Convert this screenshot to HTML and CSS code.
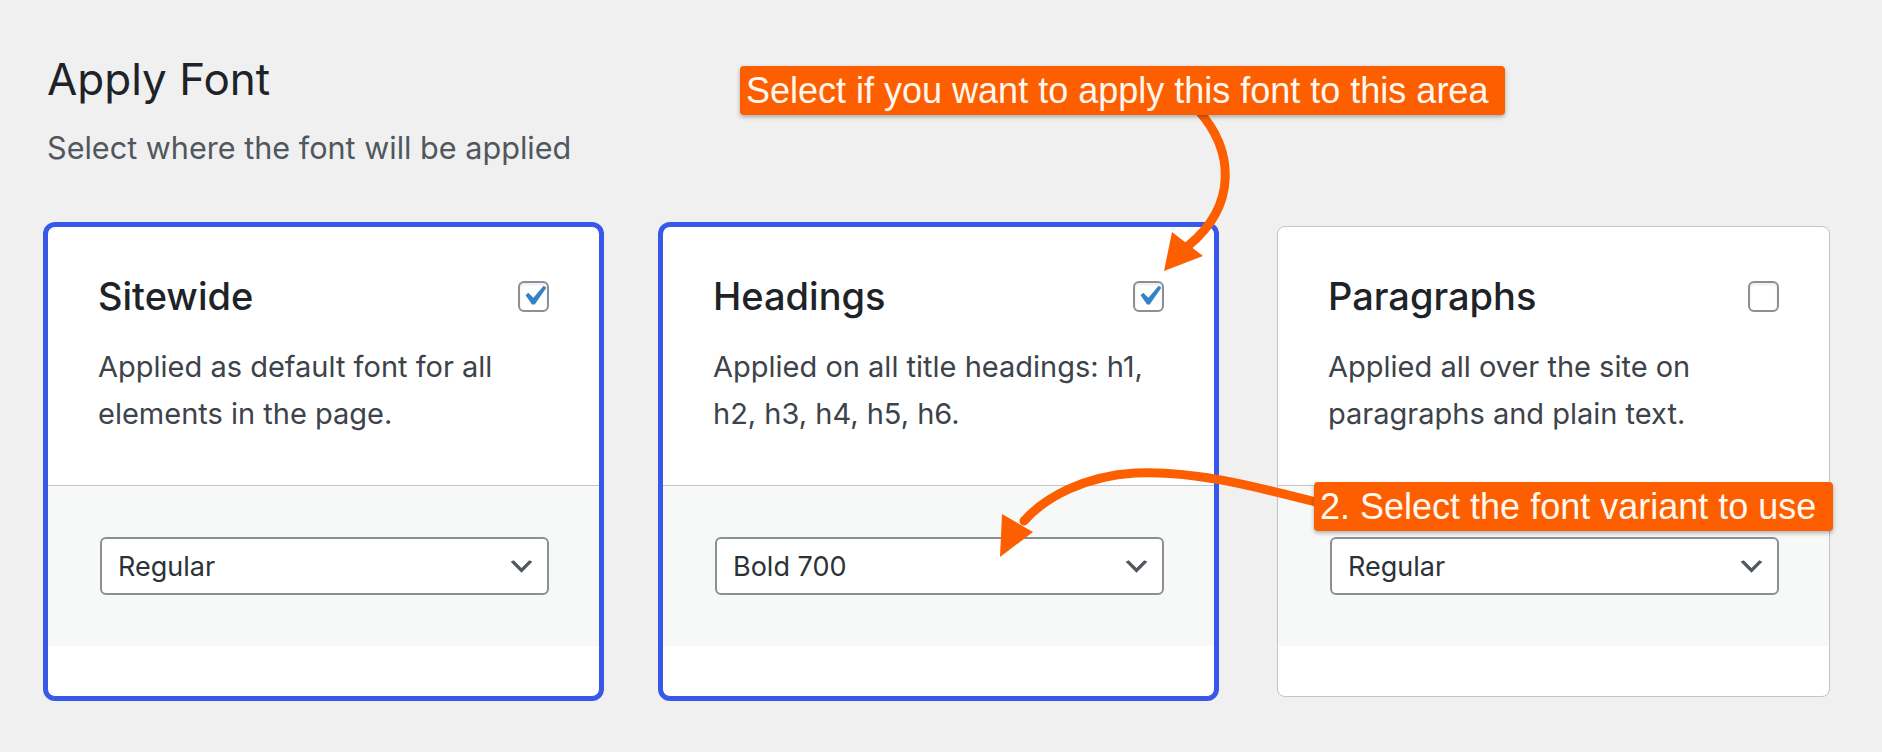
FILE: index.html
```html
<!DOCTYPE html>
<html lang="en">
<head>
<meta charset="utf-8">
<title>Apply Font</title>
<link rel="stylesheet" href="styles.css">
</head>
<body>
<div class="page">
  <h1 class="title">Apply Font</h1>
  <p class="subtitle">Select where the font will be applied</p>

  <div class="cards">
    <div class="card is-selected">
      <div class="card-body">
        <div class="card-head">
          <h2 class="card-title">Sitewide</h2>
          <span class="checkbox is-checked">
            <svg viewBox="0 0 20 20" width="40" height="40"><path d="M14.83 4.89l1.34.94-5.81 8.38H9.02L5.78 9.67l1.34-1.25 2.57 2.4z" fill="#3582c4"/></svg>
          </span>
        </div>
        <p class="card-desc">Applied as default font for all elements in the page.</p>
      </div>
      <div class="card-footer">
        <div class="select">
          <span>Regular</span>
          <svg viewBox="0 0 20 20" width="31" height="31"><path d="M5 6l5 5 5-5 2 1-7 7-7-7 2-1z" fill="#50575e"/></svg>
        </div>
      </div>
    </div>

    <div class="card is-selected">
      <div class="card-body">
        <div class="card-head">
          <h2 class="card-title">Headings</h2>
          <span class="checkbox is-checked">
            <svg viewBox="0 0 20 20" width="40" height="40"><path d="M14.83 4.89l1.34.94-5.81 8.38H9.02L5.78 9.67l1.34-1.25 2.57 2.4z" fill="#3582c4"/></svg>
          </span>
        </div>
        <p class="card-desc">Applied on all title headings: h1, h2, h3, h4, h5, h6.</p>
      </div>
      <div class="card-footer">
        <div class="select">
          <span>Bold 700</span>
          <svg viewBox="0 0 20 20" width="31" height="31"><path d="M5 6l5 5 5-5 2 1-7 7-7-7 2-1z" fill="#50575e"/></svg>
        </div>
      </div>
    </div>

    <div class="card">
      <div class="card-body">
        <div class="card-head">
          <h2 class="card-title">Paragraphs</h2>
          <span class="checkbox"></span>
        </div>
        <p class="card-desc">Applied all over the site on paragraphs and plain text.</p>
      </div>
      <div class="card-footer">
        <div class="select">
          <span>Regular</span>
          <svg viewBox="0 0 20 20" width="31" height="31"><path d="M5 6l5 5 5-5 2 1-7 7-7-7 2-1z" fill="#50575e"/></svg>
        </div>
      </div>
    </div>
  </div>

  <svg class="arrows" viewBox="0 0 1882 752" width="1882" height="752">
    <path d="M1198 110 C1234 150 1238 205 1188 246" fill="none" stroke="#fd5f00" stroke-width="9" stroke-linecap="round"/>
    <polygon points="1172,232 1203,256 1164,271" fill="#fd5f00"/>
    <path d="M1320 503 C1250 485 1190 470 1135 473 C1085 476 1045 497 1024 521" fill="none" stroke="#fd5f00" stroke-width="9" stroke-linecap="round"/>
    <polygon points="1002,514 1033,532 1000,557" fill="#fd5f00"/>
  </svg>

  <div class="callout callout-apply">Select if you want to apply this font to this area</div>
  <div class="callout callout-variant">2. Select the font variant to use</div>
</div>
</body>
</html>
```

FILE: styles.css
```css
html, body {
  margin: 0;
  padding: 0;
}

body {
  background: #f0f0f1;
  font-family: Inter, "Noto Sans", "Liberation Sans", sans-serif;
  color: #1d2327;
}

.page {
  position: relative;
  width: 1882px;
  height: 752px;
  box-sizing: border-box;
  padding: 53px 52px 0 47px;
  overflow: hidden;
}

.title {
  margin: 0;
  font-size: 44px;
  line-height: 52px;
  font-weight: 400;
  color: #1d2327;
}

.subtitle {
  margin: 23px 0 0;
  font-size: 30.6px;
  line-height: 40px;
  color: #50575e;
}

.cards {
  display: grid;
  grid-template-columns: repeat(3, 1fr);
  gap: 62px;
  margin-top: 58px;
}

.card {
  background: #fff;
  border: 1px solid #c3c4c7;
  border-radius: 8px;
  padding-bottom: 50px;
}

.card.is-selected {
  border-color: #3858e9;
  box-shadow: 0 0 0 4px #3858e9;
}

.card-body {
  padding: 46px 50px 48px;
}

.card-head {
  display: flex;
  align-items: center;
  justify-content: space-between;
}

.card-title {
  margin: 0;
  font-size: 38px;
  line-height: 46px;
  font-weight: 500;
  color: #1d2327;
}

.checkbox {
  display: flex;
  align-items: center;
  justify-content: center;
  width: 31px;
  height: 31px;
  box-sizing: border-box;
  border: 2px solid #8c8f94;
  border-radius: 6px;
  background: #fff;
  box-shadow: inset 0 2px 3px rgba(0, 0, 0, 0.08);
  overflow: visible;
}

.checkbox svg {
  flex: none;
}

.card-desc {
  margin: 24px 0 0;
  font-size: 29px;
  line-height: 47px;
  color: #3c434a;
}

.card-footer {
  background: #f7f8f8;
  border-top: 1px solid #c3c4c7;
  padding: 51px 50px 51px 52px;
}

.select {
  display: flex;
  align-items: center;
  justify-content: space-between;
  height: 58px;
  box-sizing: border-box;
  border: 2px solid #8c8f94;
  border-radius: 6px;
  background: #fff;
  padding: 0 10px 0 16px;
  font-size: 27px;
  color: #2c3338;
}

.arrows {
  position: absolute;
  left: 0;
  top: 0;
  pointer-events: none;
}

.callout {
  position: absolute;
  height: 49px;
  padding: 0 17px 0 6px;
  background: #fd5f00;
  color: #fff8f0;
  font-family: "Liberation Sans", Arial, sans-serif;
  font-size: 36px;
  line-height: 49px;
  border-radius: 4px;
  box-shadow: 0 2px 4px rgba(0, 0, 0, 0.3);
  white-space: nowrap;
}

.callout-apply {
  left: 740px;
  top: 66px;
}

.callout-variant {
  left: 1314px;
  top: 482px;
}
```
